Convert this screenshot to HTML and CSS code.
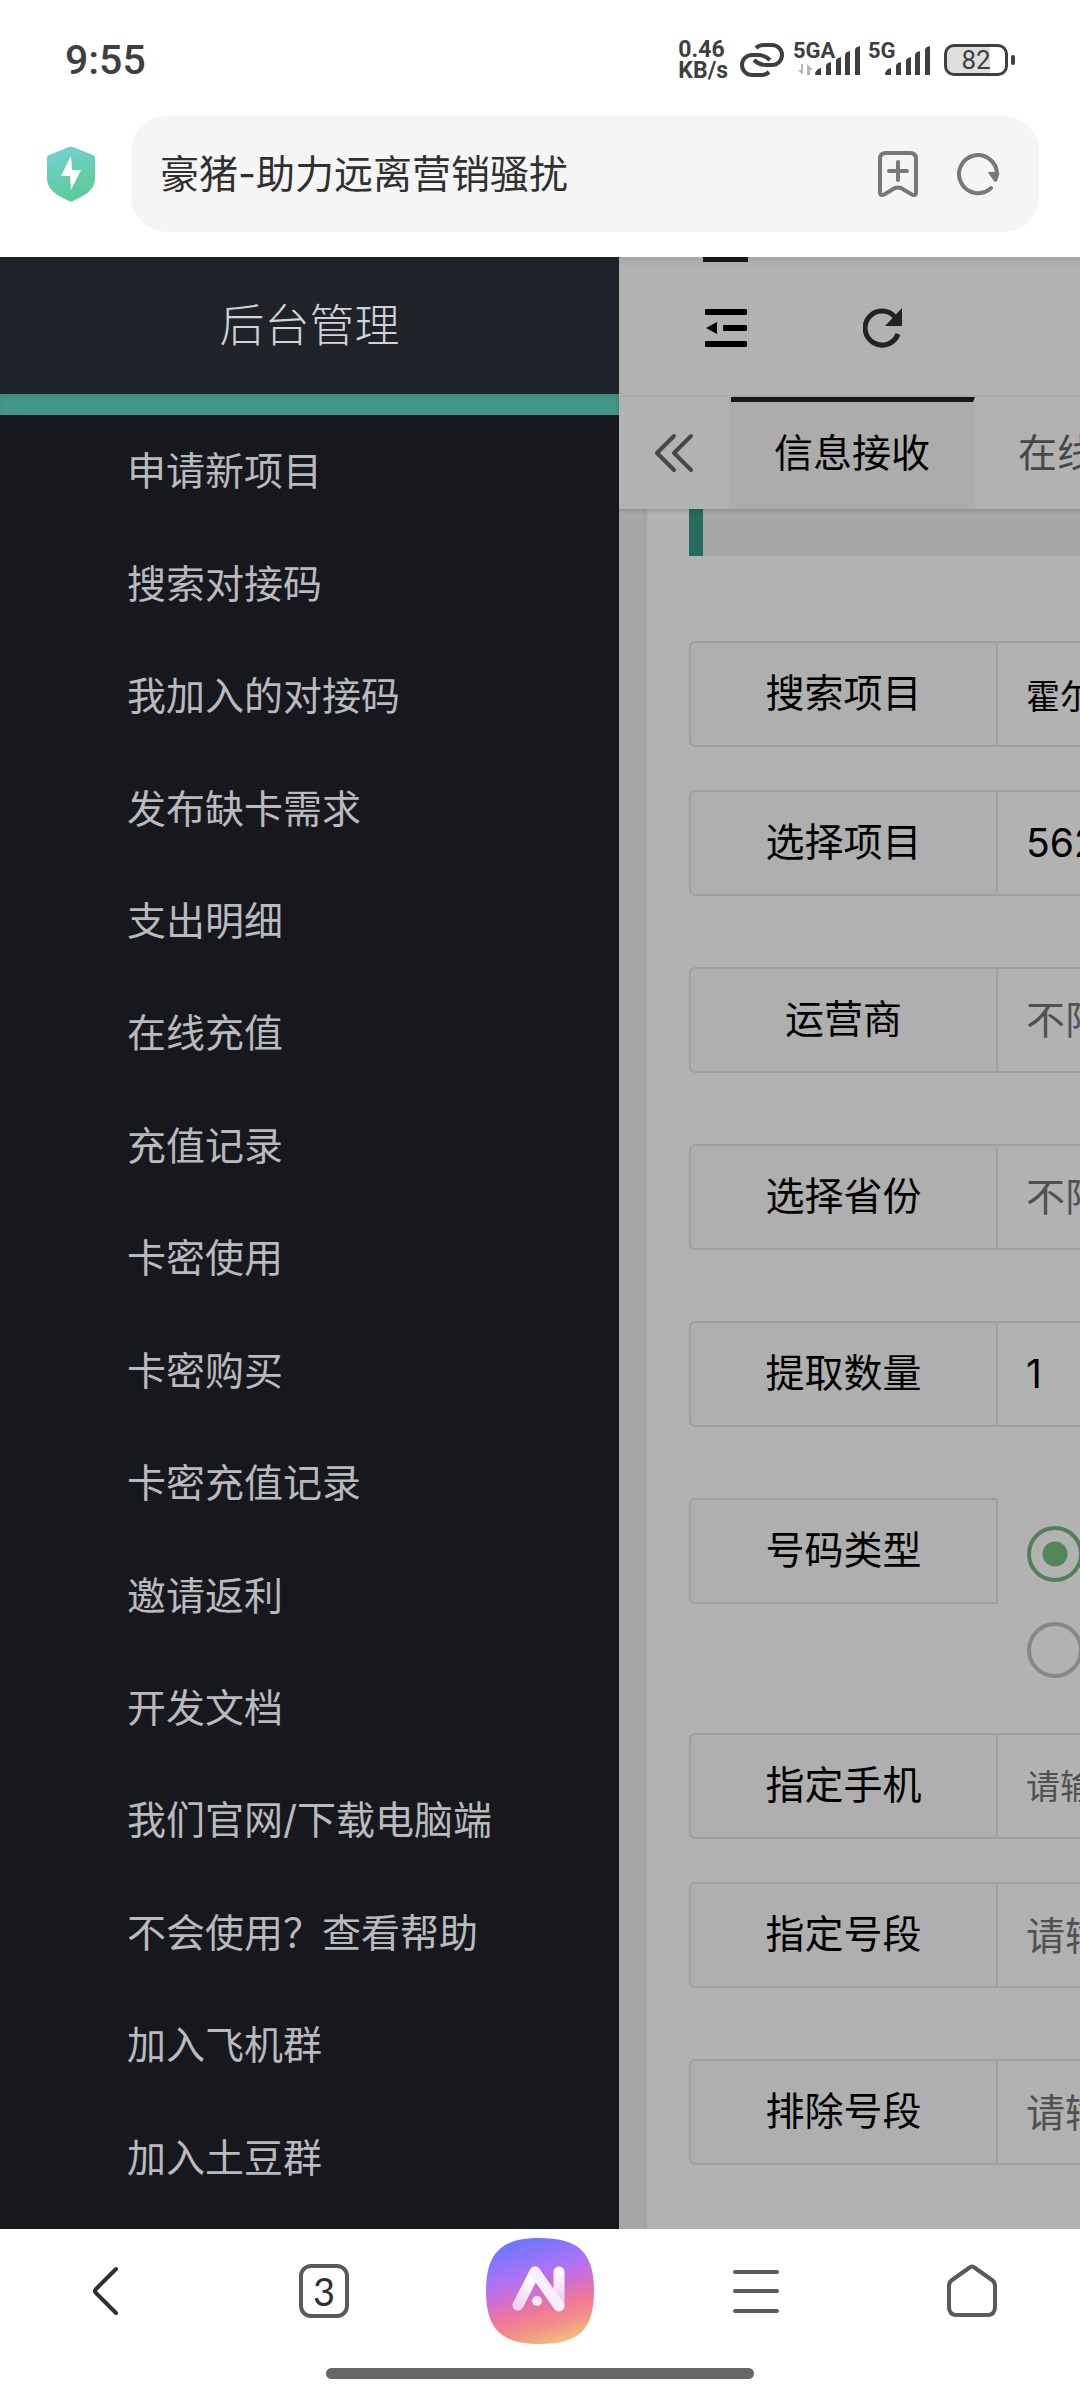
FILE: index.html
```html
<!DOCTYPE html>
<html lang="zh-CN">
  <head>
    <meta charset="UTF-8" />
    <meta name="viewport" content="width=device-width, initial-scale=1.0" />
    <title>豪猪-助力远离营销骚扰</title>
    <link rel="stylesheet" href="styles.css">
  </head>
  <body>
    <div class="status-bar">
      <span class="time">9:55</span>
      <div class="status-icons">
        <div class="net-speed"><span>0.46</span><span>KB/s</span></div>
        <svg class="link-icon" width="44" height="34" viewBox="0 0 44 34" fill="none" stroke="#3f3f3f" stroke-width="4">
          <path d="M16 5Q19 2 24 2H32A10 10 0 0 1 32 22H26Q19 22 14 17" />
          <path d="M29 29Q26 32 21 32H12A10 10 0 0 1 12 12H18Q25 12 30 17" />
        </svg>
        <div class="signal">
          <span class="signal-type">5GA</span>
          <svg width="64" height="30" viewBox="0 0 64 30" fill="#3f3f3f">
            <path fill="#b5b5b5" d="M5 19v11L0 25h3v-6zM9 30V19l6 6h-3v5z" />
            <path d="M18 30a1 1 0 0 1-1-1c0-2 3-6 6-6v7zM28 30v-9q0-3 5-4v13zM38 30V16q0-3 5-4v18zM47 30V10q0-3 5-4v24zM57 30V5q0-3 5-4v29z" />
          </svg>
        </div>
        <div class="signal">
          <span class="signal-type">5G</span>
          <svg width="64" height="30" viewBox="0 0 64 30" fill="#3f3f3f">
            <path d="M18 30a1 1 0 0 1-1-1c0-2 3-6 6-6v7zM28 30v-9q0-3 5-4v13zM38 30V16q0-3 5-4v18zM47 30V10q0-3 5-4v24zM57 30V5q0-3 5-4v29z" />
          </svg>
        </div>
        <div class="battery"><span>82</span></div>
      </div>
    </div>

    <div class="browser-bar">
      <svg width="48" height="56" viewBox="0 0 48 56">
        <defs>
          <linearGradient id="shield" x1="0" y1="0" x2="0.3" y2="1">
            <stop offset="0" stop-color="#76d3d2" />
            <stop offset="1" stop-color="#5cca9b" />
          </linearGradient>
        </defs>
        <path fill="url(#shield)" d="M22 1Q24 0 26 1L46 9Q48 10 48 12V32C48 44 37 50 26 55Q24 56 22 55C11 50 0 44 0 32V12Q0 10 2 9Z" />
        <path fill="#fff" d="M24 10L14 30H23L24 44L34 24H25Z" />
      </svg>
      <form class="address">
        <input class="address-input" type="text" aria-label="地址栏" value="豪猪-助力远离营销骚扰" />
        <button type="button" aria-label="收藏">
          <svg width="42" height="48" viewBox="0 0 42 48" fill="none" stroke="#787878" stroke-width="4" stroke-linecap="round" stroke-linejoin="round">
            <path d="M3 9Q3 3 9 3H33Q39 3 39 9V42Q39 47 34 44L24 38Q21 37 18 38L8 44Q3 47 3 42Z" />
            <path d="M21 12V30M12 21H30" />
          </svg>
        </button>
        <button type="button" aria-label="刷新">
          <svg width="44" height="44" viewBox="0 0 44 44">
            <path fill="none" stroke="#787878" stroke-width="4" stroke-linecap="round" d="M35 36A19 19 0 1 1 41 22" />
            <path fill="#787878" d="M33 22q-2-1 0-2h9q2 0 1 3l-2 6q-1 2-3 0z" />
          </svg>
        </button>
      </form>
    </div>

    <div class="page">
      <nav class="sidebar">
        <h1 class="logo">后台管理</h1>
        <div class="current-bar"></div>
        <ul class="menu">
          <li><a href="#">申请新项目</a></li>
          <li><a href="#">搜索对接码</a></li>
          <li><a href="#">我加入的对接码</a></li>
          <li><a href="#">发布缺卡需求</a></li>
          <li><a href="#">支出明细</a></li>
          <li><a href="#">在线充值</a></li>
          <li><a href="#">充值记录</a></li>
          <li><a href="#">卡密使用</a></li>
          <li><a href="#">卡密购买</a></li>
          <li><a href="#">卡密充值记录</a></li>
          <li><a href="#">邀请返利</a></li>
          <li><a href="#">开发文档</a></li>
          <li><a href="#">我们官网/下载电脑端</a></li>
          <li><a href="#">不会使用？查看帮助</a></li>
          <li><a href="#">加入飞机群</a></li>
          <li><a href="#">加入土豆群</a></li>
        </ul>
      </nav>

      <main class="main">
        <header class="toolbar">
          <button type="button" class="active" aria-label="侧边伸缩">
            <svg width="42" height="38" viewBox="0 0 42 38">
              <rect width="42" height="6" rx="1" />
              <rect x="18" y="16" width="24" height="6" rx="1" />
              <rect y="32" width="42" height="6" rx="1" />
              <path d="M1 19L12 13V25Z" />
            </svg>
          </button>
          <button type="button" aria-label="刷新">
            <svg width="40" height="40" viewBox="0 0 40 40">
              <path fill="none" stroke="#333" stroke-width="5" d="M35 26A17 17 0 1 1 32 9" />
              <path fill="#333" d="M39 0V18H22Z" />
            </svg>
          </button>
        </header>
        <div class="tabs">
          <button type="button" class="tabs-prev" aria-label="向左">
            <svg width="40" height="40" viewBox="0 0 40 40" fill="none" stroke="#666" stroke-width="4" stroke-linecap="round" stroke-linejoin="round">
              <path d="M20 3L3 20L20 37M37 3L20 20L37 37" />
            </svg>
          </button>
          <a class="tab current" href="#">信息接收</a>
          <a class="tab" href="#">在线充值</a>
        </div>

        <div class="content">
          <form class="card">
            <div class="quote"></div>
            <div class="field">
              <label for="keyword">搜索项目</label>
              <input class="small" id="keyword" type="text" value="霍尔" />
            </div>
            <div class="field spaced">
              <label for="project">选择项目</label>
              <select id="project"><option>562</option></select>
            </div>
            <div class="field spaced">
              <label for="operator">运营商</label>
              <select class="muted" id="operator"><option>不限</option></select>
            </div>
            <div class="field spaced">
              <label for="province">选择省份</label>
              <select class="muted" id="province"><option>不限</option></select>
            </div>
            <div class="field spaced">
              <label for="count">提取数量</label>
              <select id="count"><option>1</option></select>
            </div>
            <div class="field" role="radiogroup" aria-labelledby="type">
              <span class="label" id="type">号码类型</span>
              <div class="radios">
                <input type="radio" name="type" aria-label="类型一" checked />
                <input type="radio" name="type" aria-label="类型二" />
              </div>
            </div>
            <div class="field">
              <label for="phone">指定手机</label>
              <input class="small" id="phone" type="text" placeholder="请输入" />
            </div>
            <div class="field spaced">
              <label for="include">指定号段</label>
              <input id="include" type="text" placeholder="请输入" />
            </div>
            <div class="field spaced">
              <label for="exclude">排除号段</label>
              <input id="exclude" type="text" placeholder="请输入" />
            </div>
          </form>
        </div>
        <div class="shade"></div>
      </main>
    </div>

    <footer class="bottom-bar">
      <div class="bottom-nav">
        <button type="button" aria-label="后退">
          <svg width="50" height="54" viewBox="0 0 50 54" fill="none" stroke="#303030" stroke-width="4" stroke-linecap="round" stroke-linejoin="round">
            <path d="M33 5L13 25Q11 27 13 29L33 49" />
          </svg>
        </button>
        <button type="button"><span class="tab-count">3</span></button>
        <button type="button" aria-label="AI">
          <svg width="108" height="106" viewBox="0 0 108 106">
            <defs>
              <linearGradient id="ai-bg" x1="0.35" y1="0" x2="0.65" y2="1">
                <stop offset="0" stop-color="#6a78fb" />
                <stop offset="0.32" stop-color="#ab72f6" />
                <stop offset="0.5" stop-color="#cf70cb" />
                <stop offset="0.68" stop-color="#f17996" />
                <stop offset="0.82" stop-color="#f19088" />
                <stop offset="1" stop-color="#f5bd7c" />
              </linearGradient>
              <linearGradient id="ai-leg" x1="0" y1="1" x2="0.4" y2="0">
                <stop offset="0" stop-color="#f3d3f3" />
                <stop offset="1" stop-color="#fff" />
              </linearGradient>
              <linearGradient id="ai-bar" gradientUnits="userSpaceOnUse" x1="73" y1="30" x2="73" y2="60">
                <stop offset="0" stop-color="#fff" />
                <stop offset="1" stop-color="#f0d2f4" />
              </linearGradient>
            </defs>
            <path fill="url(#ai-bg)" d="M54 0C92 0 108 14 108 53C108 92 92 106 54 106C16 106 0 92 0 53C0 14 16 0 54 0Z" />
            <g fill="none" stroke-width="11" stroke-linecap="round">
              <path stroke="url(#ai-bar)" d="M73 34V66" />
              <path stroke="url(#ai-leg)" d="M32 67L49 34" />
              <path stroke="#f9eefc" d="M49 34L73 68" />
            </g>
            <circle cx="51" cy="63" r="5" fill="#fbe6f8" />
          </svg>
        </button>
        <button type="button" aria-label="菜单">
          <svg width="50" height="54" viewBox="0 0 50 54" stroke="#5a5a5a" stroke-width="4" stroke-linecap="round">
            <path d="M4 8H46M4 27H46M4 47H46" />
          </svg>
        </button>
        <button type="button" aria-label="主页">
          <svg width="50" height="54" viewBox="0 0 50 54" fill="none" stroke="#5a5a5a" stroke-width="4" stroke-linejoin="round">
            <path d="M22 4Q25 1 28 4L45 16Q48 18 48 22V43Q48 51 40 51H10Q2 51 2 43V22Q2 18 5 16Z" />
          </svg>
        </button>
      </div>
      <div class="home-indicator"></div>
    </footer>
  </body>
</html>
```
FILE: styles.css
```css
* {
  box-sizing: border-box;
}
body {
  display: flex;
  flex-direction: column;
  height: 100vh;
  margin: 0;
  overflow: hidden;
  background-color: #fff;
  font-family: Inter, "Noto Sans CJK SC", sans-serif;
  font-size: 39px;
  line-height: 56px;
}
button {
  display: flex;
  align-items: center;
  justify-content: center;
  padding: 0;
  border: none;
  background: none;
}
a {
  text-decoration: none;
}
svg {
  display: block;
}

/* phone status bar */
.status-bar {
  display: flex;
  justify-content: space-between;
  align-items: center;
  height: 116px;
  padding: 4px 72px 0 65px;
  color: #3f3f3f;
  font-family: Roboto, sans-serif;
}
.time {
  font-size: 41px;
  font-weight: 500;
}
.status-icons {
  display: flex;
  align-items: center;
}
.net-speed {
  display: flex;
  flex-direction: column;
  margin-right: 12px;
  font-size: 23px;
  font-weight: 700;
  line-height: 21px;
}
.link-icon {
  margin-right: 9px;
}
.signal {
  position: relative;
  padding-left: 5px;
}
.signal + .signal {
  padding-left: 0;
  margin-left: 6px;
}
.signal-type {
  position: absolute;
  top: -5px;
  left: 0;
  font-size: 22px;
  font-weight: 700;
  line-height: 22px;
}
.battery {
  position: relative;
  width: 64px;
  height: 32px;
  margin-left: 12px;
  border: 3px solid #3f3f3f;
  border-radius: 10px;
  background: linear-gradient(90deg, #dedede 75%, #fff 75%) padding-box;
  font-size: 26px;
  line-height: 27px;
  text-align: center;
}
.battery::after {
  content: "";
  position: absolute;
  top: 8px;
  right: -10px;
  width: 4px;
  height: 10px;
  border-radius: 2px;
  background-color: #3f3f3f;
}

/* browser address bar */
.browser-bar {
  display: flex;
  align-items: center;
  gap: 36px;
  padding: 0 41px 25px 47px;
}
.address {
  display: flex;
  flex: 1;
  align-items: center;
  gap: 37px;
  height: 116px;
  padding: 0 39px 0 29px;
  border-radius: 36px;
  background-color: #f5f5f5;
}
.address-input {
  flex: 1;
  min-width: 0;
  padding: 0;
  border: none;
  background: none;
  color: #303030;
  font: inherit;
}

.page {
  display: flex;
  flex: 1;
  min-height: 0;
  overflow: hidden;
}

/* side menu */
.sidebar {
  display: flex;
  flex: 0 0 auto;
  flex-direction: column;
  width: 619px;
  max-width: 80%;
  background-color: #17181d;
}
.logo {
  margin: 0;
  height: 137px;
  background-color: #20222a;
  color: #d2d3d4;
  font-size: 45px;
  font-weight: 300;
  line-height: 137px;
  text-align: center;
}
.current-bar {
  height: 21px;
  background-color: #439789;
  box-shadow: inset 0 4px 4px rgba(0, 0, 0, 0.08);
}
.menu {
  display: flex;
  flex: 1;
  flex-direction: column;
  margin: 0;
  padding: 0 0 15px;
  list-style: none;
}
.menu li {
  display: flex;
  flex: 1;
  align-items: center;
}
.menu a {
  flex: 1;
  padding-left: 127px;
  color: #b9babb;
}

/* main area, pushed to the right by the open menu */
.main {
  position: relative;
  display: flex;
  flex: 0 0 100%;
  flex-direction: column;
  background-color: #f0f0f0;
}
.toolbar {
  display: flex;
  flex-shrink: 0;
  height: 140px;
  padding: 0 42px;
  border-bottom: 2px solid #f6f6f6;
  background-color: #fff;
  box-shadow: inset 0 8px 8px -4px rgba(0, 0, 0, 0.08);
}
.toolbar button {
  width: 129px;
  margin-right: 28px;
  padding-top: 4px;
}
.toolbar .active {
  background: linear-gradient(#20222a, #20222a) center top / 45px 5px no-repeat;
}
.tabs {
  display: flex;
  flex-shrink: 0;
  height: 112px;
  background-color: #fff;
  box-shadow: 0 2px 4px rgba(0, 0, 0, 0.15);
  z-index: 1;
}
.tabs-prev {
  width: 112px;
  border-right: 2px solid #f6f6f6;
}
.tab {
  display: flex;
  align-items: center;
  padding: 0 43px;
  color: #666;
}
.tab.current {
  padding-bottom: 5px;
  border-top: 5px solid #20222a;
  border-right: 2px solid #f6f6f6;
  background-color: #f6f6f6;
  color: #000;
}
.content {
  flex: 1;
  padding: 0 28px 0 24px;
}
.card {
  min-height: 100%;
  padding: 0 42px;
  border-left: 4px solid #eaeaea;
  background-color: #fff;
}
.quote {
  height: 47px;
  margin-bottom: 85px;
  border-left: 14px solid #399988;
  background-color: #f0f0f0;
}
.field {
  display: flex;
  align-items: flex-start;
  margin-bottom: 43px;
}
.field.spaced {
  margin-bottom: 71px;
}
.field label,
.field .label {
  flex: 0 0 309px;
  height: 106px;
  border: 2px solid #e6e6e6;
  border-radius: 6px 0 0 6px;
  background-color: #fbfbfb;
  line-height: 100px;
  text-align: center;
}
.field input[type="text"],
.field select {
  flex: 1;
  min-width: 0;
  height: 106px;
  padding: 0 28px;
  border: 2px solid #e6e6e6;
  border-left: none;
  border-radius: 0 6px 6px 0;
  appearance: none;
  background-color: #fff;
  color: #000;
  font: inherit;
}
.field input.small {
  font-size: 34px;
}
.field select.muted {
  color: #757575;
}
.field input::placeholder {
  color: #757575;
}
.radios {
  display: flex;
  flex-direction: column;
  gap: 40px;
  padding: 28px 0 12px 29px;
}
.radios input {
  width: 56px;
  height: 56px;
  margin: 0;
  border: 4px solid #c2c2c2;
  border-radius: 50%;
  appearance: none;
}
.radios input:checked {
  border-color: #76b780;
  background: radial-gradient(circle, #76c17f 12px, transparent 13px);
}
.shade {
  position: absolute;
  inset: 0;
  z-index: 2;
  background-color: rgba(0, 0, 0, 0.3);
}

/* browser bottom bar */
.bottom-bar {
  height: 171px;
}
.bottom-nav {
  display: grid;
  grid-template-columns: repeat(5, 1fr);
  height: 124px;
}
.tab-count {
  width: 50px;
  height: 54px;
  border: 4px solid #5a5a5a;
  border-radius: 12px;
  color: #303030;
  font-family: Lato, sans-serif;
  font-size: 38px;
  line-height: 46px;
}
.home-indicator {
  width: 428px;
  height: 11px;
  margin: 15px auto 0;
  border-radius: 6px;
  background-color: #666;
}
```
